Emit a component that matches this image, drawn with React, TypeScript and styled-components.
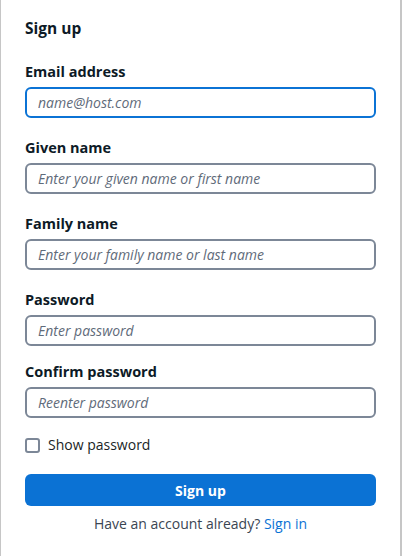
import styled, { createGlobalStyle } from 'styled-components'

const GlobalStyle = createGlobalStyle`
  html, body {
    margin: 0;
    padding: 0;
    background: #ffffff;
  }
  body {
    font-family: 'Open Sans', 'Noto Sans', sans-serif;
    color: #0d1a26;
  }
`

// space above each field, in px
const fields = [
  { label: 'Email address', placeholder: 'name@host.com', type: 'email', focused: true, space: 0 },
  { label: 'Given name', placeholder: 'Enter your given name or first name', type: 'text', space: 20 },
  { label: 'Family name', placeholder: 'Enter your family name or last name', type: 'text', space: 20 },
  { label: 'Password', placeholder: 'Enter password', type: 'password', space: 20 },
  { label: 'Confirm password', placeholder: 'Reenter password', type: 'password', space: 16 },
]

const App = () => {
  return (
    <>
      <GlobalStyle />
      <Card>
        <Title>Sign up</Title>
        <Form onSubmit={(e) => e.preventDefault()}>
          {fields.map((f) => (
            <Field key={f.label} $space={f.space}>
              <Label>{f.label}</Label>
              <Input type={f.type} placeholder={f.placeholder} $focused={f.focused} />
            </Field>
          ))}
          <CheckRow>
            <Box type="checkbox" />
            <span>Show password</span>
          </CheckRow>
          <Button type="submit">Sign up</Button>
          <Footer>
            Have an account already? <Link href="#">Sign in</Link>
          </Footer>
        </Form>
      </Card>
    </>
  )
}

const Card = styled.main`
  box-sizing: border-box;
  width: 402px;
  min-height: 556px;
  padding: 18px 24px 0 24px;
  border-left: 1px solid #c6c6c6;
  border-right: 2px solid #c6c6c6;
`

const Title = styled.h1`
  margin: 0;
  font-size: 15.5px;
  line-height: 20px;
  font-weight: 700;
  color: #0d1a26;
`

const Form = styled.form`
  display: flex;
  flex-direction: column;
  margin-top: 24px;
`

const Field = styled.label<{ $space: number }>`
  display: flex;
  flex-direction: column;
  gap: 5px;
  margin-top: ${({ $space }) => $space}px;
`

const Label = styled.span`
  font-size: 14.5px;
  line-height: 20px;
  font-weight: 700;
  color: #0d1a26;
`

const Input = styled.input<{ $focused?: boolean }>`
  box-sizing: border-box;
  width: 100%;
  height: 31px;
  padding: 0 11px;
  border-radius: 6px;
  border: 2px solid ${({ $focused }) => ($focused ? '#0b73d5' : '#7c8797')};
  font-family: 'Open Sans', sans-serif;
  font-size: 14px;
  color: #0d1a26;
  outline: none;
  background: #fff;
  &::placeholder {
    font-style: italic;
    color: #5f6b7a;
  }
`

const CheckRow = styled.label`
  display: flex;
  align-items: center;
  gap: 8px;
  margin-top: 17px;
  font-size: 14px;
  line-height: 20px;
  color: #1a1f26;
`

const Box = styled.input`
  appearance: none;
  box-sizing: border-box;
  width: 15px;
  height: 15px;
  margin: 0;
  border: 2px solid #7c8797;
  border-radius: 3px;
  background: #fff;
`

const Button = styled.button`
  margin-top: 19px;
  height: 32px;
  border: none;
  border-radius: 6px;
  background: #0b72d4;
  color: #ffffff;
  font-family: 'Open Sans', sans-serif;
  font-size: 14px;
  font-weight: 700;
`

const Footer = styled.p`
  margin: 8px 0 0 0;
  text-align: center;
  font-size: 14px;
  line-height: 20px;
  color: #3a4552;
`

const Link = styled.a`
  color: #0b72d4;
  text-decoration: none;
`

export default App
